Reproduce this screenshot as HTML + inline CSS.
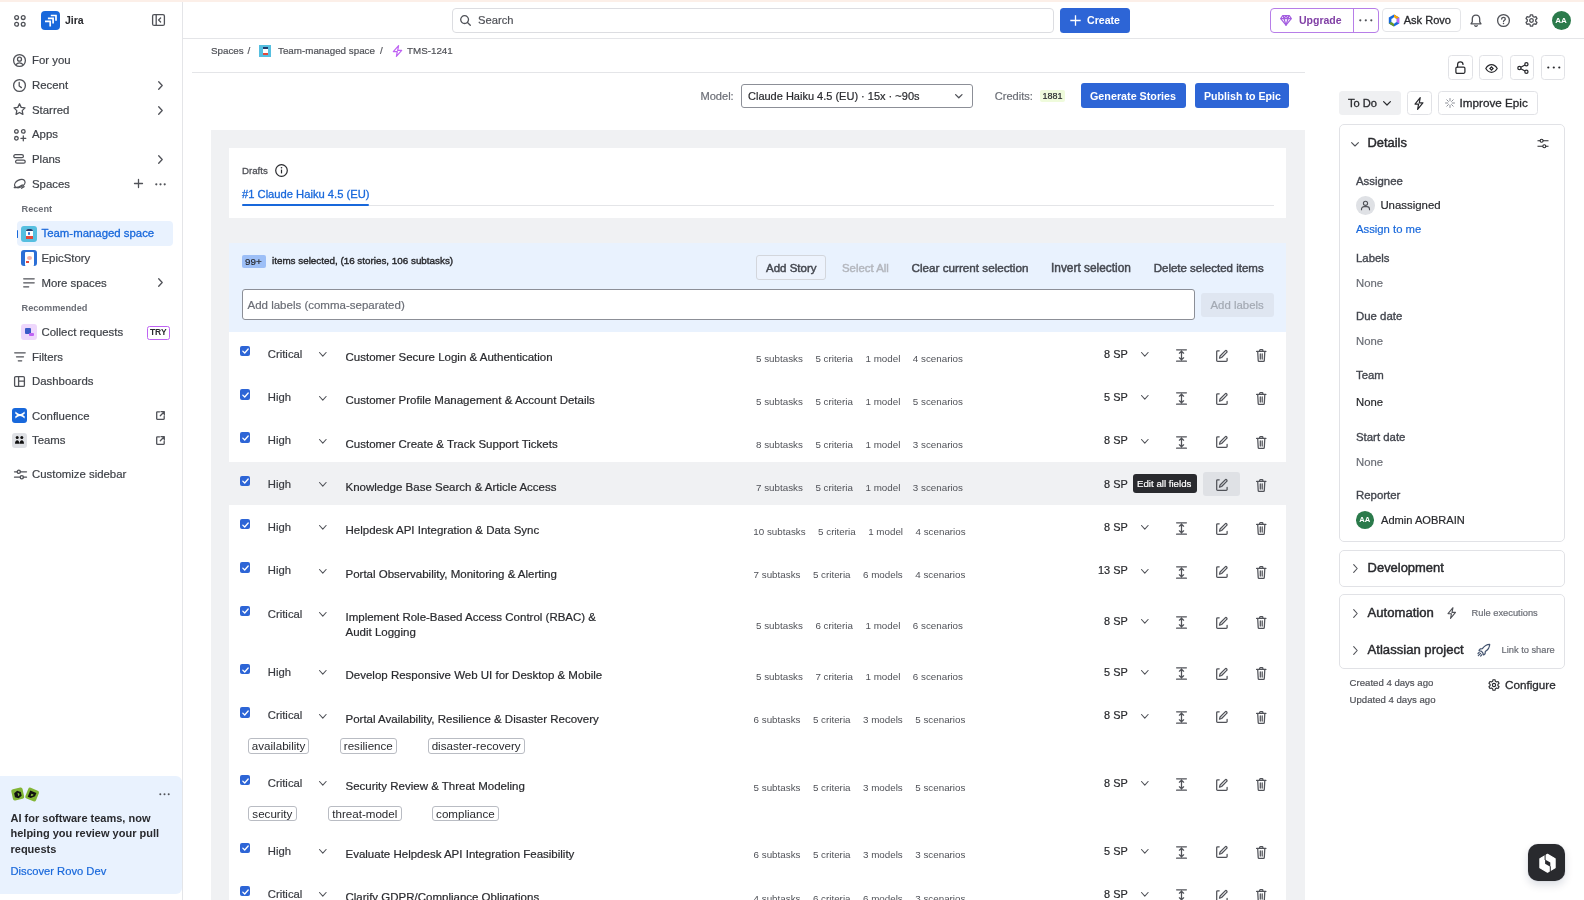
<!DOCTYPE html>
<html><head><meta charset="utf-8">
<style>
*{box-sizing:border-box;margin:0;padding:0}
html,body{width:1584px;height:900px;overflow:hidden;background:#fff}
#root{position:absolute;left:0;top:0;width:1584px;height:900px;will-change:transform}
body{font-family:"Liberation Sans",sans-serif;color:#292a2e;position:relative}
.a{position:absolute}
.t{position:absolute;white-space:nowrap;line-height:20px;height:20px;-webkit-text-stroke:0.2px currentColor}
svg{position:absolute;overflow:visible}
.ic{fill:none;stroke:#505258;stroke-width:1.3;stroke-linecap:round;stroke-linejoin:round}
/* sidebar */
.sb{font-size:11.4px;color:#3f4248}
.t.b,.b{font-weight:bold;-webkit-text-stroke:0}
.m{-webkit-text-stroke:0.3px currentColor}
</style></head><body><div id="root">
<!-- top peach line -->
<div class="a" style="left:0;top:0;width:1584px;height:2px;background:#fcefe8"></div>

<!-- SIDEBAR -->
<div class="a" style="left:182px;top:2px;width:1px;height:898px;background:#e4e5e8"></div>
<div id="sidebar">
  <!-- app grid -->
  <svg style="left:14px;top:15px" width="12" height="12" viewBox="0 0 12 12"><g class="ic" stroke-width="1.2"><circle cx="2.6" cy="2.6" r="1.9"/><circle cx="9.2" cy="2.6" r="1.9"/><circle cx="2.6" cy="9.2" r="1.9"/><circle cx="9.2" cy="9.2" r="1.9"/></g></svg>
  <!-- jira logo -->
  <div class="a" style="left:41px;top:11px;width:19px;height:19px;border-radius:4px;background:#1868db"></div>
  <svg style="left:41px;top:11px" width="19" height="19" viewBox="0 0 19 19"><g fill="none" stroke="#fff" stroke-width="1.7"><path d="M9.8 4.5h5.2v5.2"/><path d="M6.9 7.4h5.2v5.2"/><path d="M4 10.3h5.2v5.2"/></g></svg>
  <div class="t b" style="left:65px;top:10px;font-size:10.5px;color:#292a2e">Jira</div>
  <!-- collapse icon -->
  <svg style="left:152px;top:14px" width="13" height="12" viewBox="0 0 13 12"><g class="ic" stroke-width="1.2"><rect x="0.6" y="0.6" width="11.8" height="10.8" rx="1.5"/><path d="M4.2 0.6v10.8M8.6 4l-2 2 2 2"/></g></svg>

  <!-- main nav -->
  <svg style="left:13px;top:54px" width="13" height="13" viewBox="0 0 13 13"><g class="ic"><circle cx="6.5" cy="6.5" r="5.9"/><circle cx="6.5" cy="5.2" r="2"/><path d="M3 10.6c1-1.3 2.2-1.8 3.5-1.8s2.5.5 3.5 1.8"/></g></svg>
  <div class="t sb" style="left:32px;top:49.8px">For you</div>
  <svg style="left:13px;top:79px" width="13" height="13" viewBox="0 0 13 13"><g class="ic"><circle cx="6.5" cy="6.5" r="5.9"/><path d="M6.2 3.4v3.6l2.2 1.6"/></g></svg>
  <div class="t sb" style="left:32px;top:75px">Recent</div>
  <svg style="left:158px;top:81px" width="5" height="9" viewBox="0 0 5 9"><path class="ic" d="M0.7 0.7l3.5 3.8-3.5 3.8"/></svg>
  <svg style="left:13px;top:103px" width="13" height="13" viewBox="0 0 13 13"><path class="ic" d="M6.5 0.8l1.7 3.6 3.8.5-2.8 2.7.7 3.8-3.4-1.9-3.4 1.9.7-3.8L1 4.9l3.8-.5z"/></svg>
  <div class="t sb" style="left:32px;top:99.8px">Starred</div>
  <svg style="left:158px;top:105.5px" width="5" height="9" viewBox="0 0 5 9"><path class="ic" d="M0.7 0.7l3.5 3.8-3.5 3.8"/></svg>
  <svg style="left:14px;top:129px" width="12" height="12" viewBox="0 0 12 12"><g class="ic" stroke-width="1.2"><circle cx="2.4" cy="2.4" r="1.8"/><circle cx="9.3" cy="2.4" r="1.8"/><circle cx="2.4" cy="9.3" r="1.8"/><path d="M9.3 6.9v4.9M6.9 9.3h4.9"/></g></svg>
  <div class="t sb" style="left:32px;top:124.4px">Apps</div>
  <svg style="left:13px;top:154px" width="13" height="10" viewBox="0 0 13 10"><g class="ic"><path d="M2.3 0.7h6.6a1.5 1.5 0 010 3H2.3a1.5 1.5 0 010-3zM4.1 6.2h6.6a1.5 1.5 0 010 3H4.1a1.5 1.5 0 010-3z"/></g></svg>
  <div class="t sb" style="left:32px;top:149px">Plans</div>
  <svg style="left:158px;top:154.5px" width="5" height="9" viewBox="0 0 5 9"><path class="ic" d="M0.7 0.7l3.5 3.8-3.5 3.8"/></svg>
  <svg style="left:13px;top:178px" width="14" height="12" viewBox="0 0 14 12"><g class="ic" stroke-width="1.25"><ellipse cx="6.8" cy="5.6" rx="5.6" ry="3.6" transform="rotate(-28 6.8 5.6)"/><path d="M1.3 9.5c2.5.3 5.5-.5 8-2.5"/><path d="M8.5 10.2l2.6-1.6"/></g></svg>
  <div class="t sb" style="left:32px;top:173.6px">Spaces</div>
  <svg style="left:134px;top:179px" width="9" height="9" viewBox="0 0 9 9"><path class="ic" d="M4.5 0.5v8M0.5 4.5h8"/></svg>
  <svg style="left:155px;top:183px" width="11" height="3" viewBox="0 0 11 3"><g fill="#505258"><circle cx="1.3" cy="1.3" r="1.1"/><circle cx="5.5" cy="1.3" r="1.1"/><circle cx="9.7" cy="1.3" r="1.1"/></g></svg>

  <div class="t b" style="left:21.5px;top:198.5px;font-size:9.2px;color:#6b6e76">Recent</div>
  <!-- selected -->
  <div class="a" style="left:16.5px;top:221px;width:156.5px;height:24.5px;border-radius:4px;background:#e9f2fe"></div>
  <div class="a" style="left:16.5px;top:229.5px;width:1.6px;height:8px;background:#1868db;border-radius:1px"></div>
  <div class="a" style="left:21px;top:226px;width:16px;height:16px;border-radius:3px;background:#56bfe0;overflow:hidden">
    <div class="a" style="left:4.5px;top:3px;width:7px;height:9.5px;background:#fff;border-radius:2px 2px 1px 1px"></div>
    <div class="a" style="left:4.5px;top:2.5px;width:7px;height:2.5px;background:#213b6b;border-radius:2px 2px 0 0"></div>
    <div class="a" style="left:4.5px;top:10px;width:7px;height:2.5px;background:#e3493b"></div>
    <div class="a" style="left:6.8px;top:6px;width:2.5px;height:2.5px;background:#2b6fd6;border-radius:50%"></div>
  </div>
  <div class="t sb m" style="left:41.5px;top:223.3px;color:#1868db">Team-managed space</div>
  <div class="a" style="left:21px;top:250px;width:16px;height:16px;border-radius:3px;background:#2b6fd6;overflow:hidden">
    <div class="a" style="left:3.5px;top:2px;width:9px;height:14px;background:#fff;border-radius:1px"></div>
    <div class="a" style="left:5.5px;top:6px;width:5px;height:4px;background:#f2b1a8;border-radius:50%"></div>
    <div class="a" style="left:5px;top:11px;width:3px;height:2px;background:#e3493b"></div>
  </div>
  <div class="t sb" style="left:41.5px;top:248.3px">EpicStory</div>
  <svg style="left:23px;top:278px" width="12" height="10" viewBox="0 0 12 10"><path class="ic" d="M0.7 0.8h10.5M0.7 4.8h10.5M0.7 8.8h5"/></svg>
  <div class="t sb" style="left:41.5px;top:272.5px">More spaces</div>
  <svg style="left:158px;top:278px" width="5" height="9" viewBox="0 0 5 9"><path class="ic" d="M0.7 0.7l3.5 3.8-3.5 3.8"/></svg>
  <div class="t b" style="left:21.5px;top:297.5px;font-size:9.2px;color:#6b6e76">Recommended</div>
  <div class="a" style="left:21px;top:324px;width:16px;height:16px;border-radius:3px;background:#eed7fc"></div>
  <div class="a" style="left:25px;top:328px;width:6px;height:6px;background:#3a5bc7;border-radius:1px"></div>
  <div class="a" style="left:29px;top:333px;width:5px;height:3px;background:#bf63f3;border-radius:1px"></div>
  <div class="t sb" style="left:41.5px;top:322px">Collect requests</div>
  <div class="a" style="left:146.5px;top:326px;width:23.5px;height:13.5px;border:1px solid #bf63f3;border-radius:2.5px;font-size:8.5px;font-weight:bold;line-height:11.5px;text-align:center;color:#292a2e">TRY</div>

  <svg style="left:14px;top:352px" width="12" height="10" viewBox="0 0 12 10"><path class="ic" d="M0.7 0.8h10.5M2.5 4.8h7M4.3 8.8h3.4"/></svg>
  <div class="t sb" style="left:32px;top:347px">Filters</div>
  <svg style="left:14px;top:376px" width="11" height="11" viewBox="0 0 11 11"><g class="ic"><rect x="0.6" y="0.6" width="9.8" height="9.8" rx="1.2"/><path d="M4.6 0.6v9.8M4.6 5.2h5.8"/></g></svg>
  <div class="t sb" style="left:32px;top:371.2px">Dashboards</div>

  <div class="a" style="left:12px;top:407.5px;width:15px;height:15px;border-radius:3px;background:#1868db"></div>
  <svg style="left:14.5px;top:410px" width="10" height="10" viewBox="0 0 10 10"><g fill="#fff"><path d="M0.5 1.5c2 2 3.5 2.6 4.5 2.6s2.5-.6 4.5-2.6l.3 2c-1.8 1.5-3.3 2.2-4.8 2.2S2 5 .2 3.5z"/><path d="M0.5 8.5c2-2 3.5-2.6 4.5-2.6s2.5.6 4.5 2.6l.3-2C8 5 6.5 4.3 5 4.3S2 5 .2 6.5z"/></g></svg>
  <div class="t sb" style="left:32px;top:405.8px">Confluence</div>
  <svg style="left:156px;top:411px" width="9" height="9" viewBox="0 0 9 9"><g class="ic" stroke-width="1.1"><path d="M3.5 0.8H1.3a.6.6 0 00-.6.6v6.3a.6.6 0 00.6.6h6.3a.6.6 0 00.6-.6V5.5M5 0.7h3.3V4M8.2 0.8L4.3 4.7"/></g></svg>
  <div class="a" style="left:12px;top:432.5px;width:15px;height:15px;border-radius:3px;background:#dfe1e5"></div>
  <svg style="left:15px;top:436px" width="9" height="8" viewBox="0 0 9 8"><g fill="#111"><circle cx="2.2" cy="1.6" r="1.5"/><circle cx="6.8" cy="1.6" r="1.5"/><path d="M0 7.8c0-2.4.9-3.6 2.2-3.6s2.2 1.2 2.2 3.6zM4.6 7.8c0-2.4.9-3.6 2.2-3.6S9 5.4 9 7.8z"/></g></svg>
  <div class="t sb" style="left:32px;top:430px">Teams</div>
  <svg style="left:156px;top:435.5px" width="9" height="9" viewBox="0 0 9 9"><g class="ic" stroke-width="1.1"><path d="M3.5 0.8H1.3a.6.6 0 00-.6.6v6.3a.6.6 0 00.6.6h6.3a.6.6 0 00.6-.6V5.5M5 0.7h3.3V4M8.2 0.8L4.3 4.7"/></g></svg>
  <svg style="left:13.5px;top:468.5px" width="13" height="11" viewBox="0 0 13 11"><g class="ic" stroke-width="1.1"><path d="M0.5 2.8h2.8M6.3 2.8h6.2M0.5 8.2h5.8M9.3 8.2h3.2"/><circle cx="4.8" cy="2.8" r="1.6"/><circle cx="7.8" cy="8.2" r="1.6"/></g></svg>
  <div class="t sb" style="left:32px;top:464.2px">Customize sidebar</div>

  <!-- promo -->
  <div class="a" style="left:0;top:776px;width:182px;height:117.5px;background:#e9f2fe;border-radius:0 6px 6px 0"></div>
  <svg style="left:11px;top:785.5px" width="29" height="18" viewBox="0 0 29 18"><g transform="rotate(-12 7 9)"><rect x="1.2" y="2.2" width="11.5" height="11.5" rx="2" fill="#82b536"/></g><g transform="rotate(22 21 9)"><rect x="15.2" y="2.8" width="11.5" height="11.5" rx="2" fill="#82b536"/></g><g transform="rotate(-12 7 9)"><path d="M7 4.6l3.4 2v3.9L7 12.4 3.6 10.5V6.6z" fill="#111"/><path d="M7 6.8l1.5.9v1.7L7 10.2z" fill="#82b536"/></g><g transform="rotate(22 21 9)"><path d="M17.7 5.5h6.6v3.5l-3.3 3.3h-3.3z" fill="#111"/><path d="M20 8h2.2v1L21 10.2h-1z" fill="#82b536"/></g></svg>
  <svg style="left:158.5px;top:793px" width="11" height="3" viewBox="0 0 11 3"><g fill="#505258"><circle cx="1.3" cy="1.3" r="1"/><circle cx="5.5" cy="1.3" r="1"/><circle cx="9.7" cy="1.3" r="1"/></g></svg>
  <div class="a b" style="left:10.5px;top:810.5px;width:170px;font-size:11px;line-height:15.5px;color:#292a2e">AI for software teams, now<br>helping you review your pull<br>requests</div>
  <div class="t" style="left:10.5px;top:861px;font-size:11.2px;color:#1868db">Discover Rovo Dev</div>
</div>

<!-- HEADER -->
<div class="a" style="left:183px;top:38px;width:1401px;height:1px;background:#e4e5e8"></div>
<div class="a" style="left:452px;top:8px;width:602px;height:25px;border:1px solid #dcdde1;border-radius:4px"></div>
<svg style="left:460px;top:15px" width="11" height="11" viewBox="0 0 11 11"><g class="ic" stroke-width="1.3"><circle cx="4.6" cy="4.6" r="3.9"/><path d="M7.5 7.5l2.8 2.8"/></g></svg>
<div class="t" style="left:478px;top:10.3px;font-size:11.2px;color:#505258">Search</div>
<div class="a" style="left:1060px;top:8px;width:70px;height:24.5px;border-radius:3.5px;background:#2d65d6"></div>
<svg style="left:1070px;top:15px" width="11" height="11" viewBox="0 0 11 11"><path d="M5.5 0.3v10.4M0.3 5.5h10.4" stroke="#fff" stroke-width="1.3" fill="none"/></svg>
<div class="t b" style="left:1087px;top:10.3px;font-size:10.6px;color:#fff">Create</div>

<div class="a" style="left:1270px;top:8px;width:108.5px;height:24.5px;border:1px solid #b77ee8;border-radius:4px"></div>
<div class="a" style="left:1352.5px;top:8px;width:1px;height:24.5px;background:#b77ee8"></div>
<svg style="left:1280px;top:15px" width="12" height="11" viewBox="0 0 12 11"><g fill="none" stroke="#a45ee0" stroke-width="1.2" stroke-linejoin="round"><path d="M2.7 0.7h6.6l2 3-5.3 6.5L0.7 3.7z"/><path d="M0.7 3.7h10.6M4 3.7L6 10.2 8 3.7M3.3 0.8L4 3.7 6 0.8 8 3.7l.8-2.9"/></g></svg>
<div class="t b" style="left:1299px;top:10.3px;font-size:10.5px;color:#803fa5">Upgrade</div>
<svg style="left:1359px;top:19px" width="14" height="3" viewBox="0 0 14 3"><g fill="#505258"><circle cx="1.3" cy="1.3" r="1.1"/><circle cx="6.8" cy="1.3" r="1.1"/><circle cx="12.3" cy="1.3" r="1.1"/></g></svg>

<div class="a" style="left:1381.5px;top:8.3px;width:79px;height:24px;border:1px solid #e4e5e8;border-radius:4px"></div>
<svg style="left:1388px;top:14px" width="12" height="13" viewBox="0 0 12 13"><path d="M6 0.5l5.2 3v6L6 12.5 0.8 9.5v-6z" fill="#1868db"/><path d="M6 0.5l5.2 3-2.6 1.5L6 3.5z" fill="#fca700"/><path d="M11.2 3.5v6L8.6 8V5z" fill="#bf63f3"/><path d="M0.8 9.5L6 12.5V9.5L3.4 8z" fill="#6a9a23"/><path d="M6 3.5l2.6 1.5v3L6 9.5 3.4 8V5z" fill="#fff"/><path d="M6 3.5v6" stroke="#fff" stroke-width="1"/></svg>
<div class="t m" style="left:1403.7px;top:10.3px;font-size:11.05px;color:#292a2e">Ask Rovo</div>
<svg style="left:1470px;top:14px" width="12" height="13" viewBox="0 0 12 13"><g class="ic" stroke-width="1.2"><path d="M6 1.1c-2.3 0-3.7 1.8-3.7 4v2.7L1 9.8h10L9.7 7.8V5.1c0-2.2-1.4-4-3.7-4z"/><path d="M4.8 11.6c.3.5.7.7 1.2.7s.9-.2 1.2-.7"/></g></svg>
<svg style="left:1497px;top:14px" width="13" height="13" viewBox="0 0 13 13"><g class="ic" stroke-width="1.2"><circle cx="6.5" cy="6.5" r="5.9"/><path d="M4.7 5.1c0-1 .8-1.8 1.8-1.8s1.8.7 1.8 1.6c0 1.3-1.8 1.4-1.8 2.7"/></g><circle cx="6.5" cy="9.6" r=".75" fill="#505258"/></svg>
<svg style="left:1525px;top:14px" width="13" height="13" viewBox="0 0 13 13"><g class="ic" stroke-width="1.2"><path d="M5.4 0.8h2.2l.4 1.7 1.2.7 1.7-.5 1.1 1.9-1.3 1.2v1.4l1.3 1.2-1.1 1.9-1.7-.5-1.2.7-.4 1.7H5.4L5 10.5l-1.2-.7-1.7.5L1 8.4l1.3-1.2V5.8L1 4.6l1.1-1.9 1.7.5L5 2.5z"/><circle cx="6.5" cy="6.5" r="1.8"/></g></svg>
<div class="a" style="left:1551.5px;top:10.8px;width:19px;height:19px;border-radius:50%;background:#2b7a4b;color:#fff;font-size:8px;font-weight:bold;line-height:19px;text-align:center">AA</div>

<!--MAIN-->
<div class="a" style="left:211px;top:129.5px;width:1094px;height:770px;background:#f0f1f3"></div>
<div class="a" style="left:229.3px;top:148px;width:1056.7px;height:70px;background:#fff"></div>
<div class="t m" style="left:242px;top:160.5px;font-size:9.7px;color:#505258">Drafts</div>
<svg style="left:274.5px;top:163.5px" width="13" height="13" viewBox="0 0 13 13"><g fill="none" stroke="#292a2e" stroke-width="1.2"><circle cx="6.5" cy="6.5" r="5.8"/><path d="M6.5 5.6v3.8"/></g><circle cx="6.5" cy="3.8" r=".8" fill="#292a2e"/></svg>
<div class="a" style="left:242px;top:204.5px;width:1031.5px;height:1px;background:#e4e5e8"></div>
<div class="t m" style="left:242px;top:183.5px;font-size:11.2px;color:#1868db">#1 Claude Haiku 4.5 (EU)</div>
<div class="a" style="left:242px;top:203.8px;width:127px;height:2.2px;background:#1868db;border-radius:1px"></div>
<div class="a" style="left:229.3px;top:243px;width:1056.7px;height:89px;background:#e9f2fe"></div>
<div class="a" style="left:242px;top:255px;width:23.7px;height:12.6px;background:#9dbff7;border-radius:2px"></div>
<div class="t" style="left:245px;top:251.5px;font-size:9.8px;color:#292a2e">99+</div>
<div class="t m" style="left:272px;top:251.2px;font-size:9.85px;color:#292a2e;-webkit-text-stroke:0.4px #292a2e">items selected, (16 stories, 106 subtasks)</div>
<div class="a" style="left:756.4px;top:255.3px;width:69.3px;height:24.3px;border:1px solid #d3d6dc;border-radius:3px;background:#edf3fd"></div>
<div class="t" style="left:766px;top:257.9px;font-size:11.5px;color:#44474f;-webkit-text-stroke:0.45px #44474f">Add Story</div>
<div class="t" style="left:842px;top:257.9px;font-size:11.4px;color:#b3b6bd;-webkit-text-stroke:0.45px #b3b6bd">Select All</div>
<div class="t" style="left:911.5px;top:257.9px;font-size:11.7px;color:#44474f;-webkit-text-stroke:0.45px #44474f">Clear current selection</div>
<div class="t" style="left:1051px;top:257.9px;font-size:11.9px;color:#44474f;-webkit-text-stroke:0.45px #44474f">Invert selection</div>
<div class="t" style="left:1153.7px;top:257.9px;font-size:11.5px;color:#44474f;-webkit-text-stroke:0.45px #44474f">Delete selected items</div>
<div class="a" style="left:242px;top:289.4px;width:952.7px;height:30.4px;border:1px solid #8c8f97;border-radius:3px;background:#fff"></div>
<div class="t" style="left:247.5px;top:294.8px;font-size:11.5px;color:#6b6e76">Add labels (comma-separated)</div>
<div class="a" style="left:1201px;top:292.6px;width:72.7px;height:24.1px;border-radius:3px;background:#dfe6f1"></div>
<div class="t" style="left:1210.5px;top:294.8px;font-size:11.4px;color:#a3a9b3">Add labels</div>
<div class="a" style="left:229.3px;top:332px;width:1056.7px;height:568px;background:#fff"></div>
<div class="a" style="left:239.8px;top:345.7px;width:10.4px;height:10.6px;border-radius:2px;background:#2d65d6"></div>
<svg style="left:241.5px;top:348.3px" width="7" height="6" viewBox="0 0 7 6"><path d="M0.8 3.1l1.9 1.9L6.2 1" fill="none" stroke="#fff" stroke-width="1.3" stroke-linecap="round" stroke-linejoin="round"/></svg>
<div class="t" style="left:267.8px;top:343.8px;font-size:11.3px;color:#3a3c42">Critical</div>
<svg style="left:319.2px;top:352.2px" width="7.6" height="4.6" viewBox="0 0 7.6 4.6"><path d="M0.5 0.5L3.8 4.1L7.1 0.5" fill="none" stroke="#505258" stroke-width="1.1" stroke-linecap="round" stroke-linejoin="round"/></svg>
<div class="t" style="left:345.5px;top:347.0px;font-size:11.5px;color:#292a2e">Customer Secure Login &amp; Authentication</div>
<div class="a" style="left:659.5px;top:348.5px;width:400px;height:20px;display:flex;justify-content:center;gap:12.5px;font-size:9.8px;line-height:20px;color:#505258;white-space:nowrap"><span>5 subtasks</span><span>5 criteria</span><span>1 model</span><span>4 scenarios</span></div>
<div class="t" style="left:1027.7px;width:100px;text-align:right;top:343.8px;font-size:10.9px;color:#292a2e">8 SP</div>
<svg style="left:1141.3px;top:352.0px" width="7.6" height="4.6" viewBox="0 0 7.6 4.6"><path d="M0.5 0.5L3.8 4.1L7.1 0.5" fill="none" stroke="#505258" stroke-width="1.1" stroke-linecap="round" stroke-linejoin="round"/></svg>
<svg style="left:1176px;top:349.0px" width="11" height="13" viewBox="0 0 11 13"><g fill="none" stroke="#505258" stroke-width="1.25" stroke-linecap="round" stroke-linejoin="round"><path d="M0.6 0.8h9.8M0.6 12.2h9.8M5.5 2.2v8.6M3.4 4.2l2.1-2 2.1 2M3.4 8.8l2.1 2 2.1-2"/></g></svg>
<svg style="left:1215.8px;top:349.5px" width="12" height="12" viewBox="0 0 12 12"><g fill="none" stroke="#505258" stroke-width="1.25" stroke-linecap="round" stroke-linejoin="round"><path d="M3.2 0.8H1.6a.9.9 0 00-.9.9v8.8a.9.9 0 00.9.9h8.6a.9.9 0 00.9-.9V8.4"/><path d="M9.2 0.9a1 1 0 011.5 1.5L5.6 7.5 3.5 8.2l.6-2.2z"/></g></svg>
<svg style="left:1256.3px;top:349.0px" width="10.5" height="13" viewBox="0 0 10.5 13"><g fill="none" stroke="#505258" stroke-width="1.25" stroke-linecap="round" stroke-linejoin="round"><path d="M0.6 2.4h9.3M3.6 2.3V1.5c0-.5.4-.8.8-.8h1.7c.4 0 .8.3.8.8v.8M1.7 2.5l.5 8.9c0 .5.4.9.9.9h4.3c.5 0 .9-.4.9-.9l.5-8.9M4.3 4.8v5.2M6.2 4.8v5.2"/></g></svg>
<div class="a" style="left:239.8px;top:389.0px;width:10.4px;height:10.6px;border-radius:2px;background:#2d65d6"></div>
<svg style="left:241.5px;top:391.6px" width="7" height="6" viewBox="0 0 7 6"><path d="M0.8 3.1l1.9 1.9L6.2 1" fill="none" stroke="#fff" stroke-width="1.3" stroke-linecap="round" stroke-linejoin="round"/></svg>
<div class="t" style="left:267.8px;top:387.1px;font-size:11.3px;color:#3a3c42">High</div>
<svg style="left:319.2px;top:395.5px" width="7.6" height="4.6" viewBox="0 0 7.6 4.6"><path d="M0.5 0.5L3.8 4.1L7.1 0.5" fill="none" stroke="#505258" stroke-width="1.1" stroke-linecap="round" stroke-linejoin="round"/></svg>
<div class="t" style="left:345.5px;top:390.3px;font-size:11.5px;color:#292a2e">Customer Profile Management &amp; Account Details</div>
<div class="a" style="left:659.5px;top:391.8px;width:400px;height:20px;display:flex;justify-content:center;gap:12.5px;font-size:9.8px;line-height:20px;color:#505258;white-space:nowrap"><span>5 subtasks</span><span>5 criteria</span><span>1 model</span><span>5 scenarios</span></div>
<div class="t" style="left:1027.7px;width:100px;text-align:right;top:387.1px;font-size:10.9px;color:#292a2e">5 SP</div>
<svg style="left:1141.3px;top:395.3px" width="7.6" height="4.6" viewBox="0 0 7.6 4.6"><path d="M0.5 0.5L3.8 4.1L7.1 0.5" fill="none" stroke="#505258" stroke-width="1.1" stroke-linecap="round" stroke-linejoin="round"/></svg>
<svg style="left:1176px;top:392.3px" width="11" height="13" viewBox="0 0 11 13"><g fill="none" stroke="#505258" stroke-width="1.25" stroke-linecap="round" stroke-linejoin="round"><path d="M0.6 0.8h9.8M0.6 12.2h9.8M5.5 2.2v8.6M3.4 4.2l2.1-2 2.1 2M3.4 8.8l2.1 2 2.1-2"/></g></svg>
<svg style="left:1215.8px;top:392.8px" width="12" height="12" viewBox="0 0 12 12"><g fill="none" stroke="#505258" stroke-width="1.25" stroke-linecap="round" stroke-linejoin="round"><path d="M3.2 0.8H1.6a.9.9 0 00-.9.9v8.8a.9.9 0 00.9.9h8.6a.9.9 0 00.9-.9V8.4"/><path d="M9.2 0.9a1 1 0 011.5 1.5L5.6 7.5 3.5 8.2l.6-2.2z"/></g></svg>
<svg style="left:1256.3px;top:392.3px" width="10.5" height="13" viewBox="0 0 10.5 13"><g fill="none" stroke="#505258" stroke-width="1.25" stroke-linecap="round" stroke-linejoin="round"><path d="M0.6 2.4h9.3M3.6 2.3V1.5c0-.5.4-.8.8-.8h1.7c.4 0 .8.3.8.8v.8M1.7 2.5l.5 8.9c0 .5.4.9.9.9h4.3c.5 0 .9-.4.9-.9l.5-8.9M4.3 4.8v5.2M6.2 4.8v5.2"/></g></svg>
<div class="a" style="left:239.8px;top:432.3px;width:10.4px;height:10.6px;border-radius:2px;background:#2d65d6"></div>
<svg style="left:241.5px;top:434.9px" width="7" height="6" viewBox="0 0 7 6"><path d="M0.8 3.1l1.9 1.9L6.2 1" fill="none" stroke="#fff" stroke-width="1.3" stroke-linecap="round" stroke-linejoin="round"/></svg>
<div class="t" style="left:267.8px;top:430.4px;font-size:11.3px;color:#3a3c42">High</div>
<svg style="left:319.2px;top:438.8px" width="7.6" height="4.6" viewBox="0 0 7.6 4.6"><path d="M0.5 0.5L3.8 4.1L7.1 0.5" fill="none" stroke="#505258" stroke-width="1.1" stroke-linecap="round" stroke-linejoin="round"/></svg>
<div class="t" style="left:345.5px;top:433.6px;font-size:11.5px;color:#292a2e">Customer Create &amp; Track Support Tickets</div>
<div class="a" style="left:659.5px;top:435.1px;width:400px;height:20px;display:flex;justify-content:center;gap:12.5px;font-size:9.8px;line-height:20px;color:#505258;white-space:nowrap"><span>8 subtasks</span><span>5 criteria</span><span>1 model</span><span>3 scenarios</span></div>
<div class="t" style="left:1027.7px;width:100px;text-align:right;top:430.4px;font-size:10.9px;color:#292a2e">8 SP</div>
<svg style="left:1141.3px;top:438.6px" width="7.6" height="4.6" viewBox="0 0 7.6 4.6"><path d="M0.5 0.5L3.8 4.1L7.1 0.5" fill="none" stroke="#505258" stroke-width="1.1" stroke-linecap="round" stroke-linejoin="round"/></svg>
<svg style="left:1176px;top:435.6px" width="11" height="13" viewBox="0 0 11 13"><g fill="none" stroke="#505258" stroke-width="1.25" stroke-linecap="round" stroke-linejoin="round"><path d="M0.6 0.8h9.8M0.6 12.2h9.8M5.5 2.2v8.6M3.4 4.2l2.1-2 2.1 2M3.4 8.8l2.1 2 2.1-2"/></g></svg>
<svg style="left:1215.8px;top:436.1px" width="12" height="12" viewBox="0 0 12 12"><g fill="none" stroke="#505258" stroke-width="1.25" stroke-linecap="round" stroke-linejoin="round"><path d="M3.2 0.8H1.6a.9.9 0 00-.9.9v8.8a.9.9 0 00.9.9h8.6a.9.9 0 00.9-.9V8.4"/><path d="M9.2 0.9a1 1 0 011.5 1.5L5.6 7.5 3.5 8.2l.6-2.2z"/></g></svg>
<svg style="left:1256.3px;top:435.6px" width="10.5" height="13" viewBox="0 0 10.5 13"><g fill="none" stroke="#505258" stroke-width="1.25" stroke-linecap="round" stroke-linejoin="round"><path d="M0.6 2.4h9.3M3.6 2.3V1.5c0-.5.4-.8.8-.8h1.7c.4 0 .8.3.8.8v.8M1.7 2.5l.5 8.9c0 .5.4.9.9.9h4.3c.5 0 .9-.4.9-.9l.5-8.9M4.3 4.8v5.2M6.2 4.8v5.2"/></g></svg>
<div class="a" style="left:229.3px;top:461.9px;width:1056.7px;height:43.3px;background:#f0f1f3"></div>
<div class="a" style="left:239.8px;top:475.6px;width:10.4px;height:10.6px;border-radius:2px;background:#2d65d6"></div>
<svg style="left:241.5px;top:478.2px" width="7" height="6" viewBox="0 0 7 6"><path d="M0.8 3.1l1.9 1.9L6.2 1" fill="none" stroke="#fff" stroke-width="1.3" stroke-linecap="round" stroke-linejoin="round"/></svg>
<div class="t" style="left:267.8px;top:473.7px;font-size:11.3px;color:#3a3c42">High</div>
<svg style="left:319.2px;top:482.1px" width="7.6" height="4.6" viewBox="0 0 7.6 4.6"><path d="M0.5 0.5L3.8 4.1L7.1 0.5" fill="none" stroke="#505258" stroke-width="1.1" stroke-linecap="round" stroke-linejoin="round"/></svg>
<div class="t" style="left:345.5px;top:476.9px;font-size:11.5px;color:#292a2e">Knowledge Base Search &amp; Article Access</div>
<div class="a" style="left:659.5px;top:478.4px;width:400px;height:20px;display:flex;justify-content:center;gap:12.5px;font-size:9.8px;line-height:20px;color:#505258;white-space:nowrap"><span>7 subtasks</span><span>5 criteria</span><span>1 model</span><span>3 scenarios</span></div>
<div class="t" style="left:1027.7px;width:100px;text-align:right;top:473.7px;font-size:10.9px;color:#292a2e">8 SP</div>
<div class="a" style="left:1132.5px;top:474.1px;width:64.5px;height:18.7px;border-radius:3px;background:#292a2e"></div>
<div class="t" style="left:1137px;top:474.2px;font-size:9.7px;color:#fff">Edit all fields</div>
<div class="a" style="left:1203.2px;top:471.7px;width:36.4px;height:24.3px;border-radius:3px;background:#dfe1e5"></div>
<svg style="left:1215.8px;top:479.4px" width="12" height="12" viewBox="0 0 12 12"><g fill="none" stroke="#505258" stroke-width="1.25" stroke-linecap="round" stroke-linejoin="round"><path d="M3.2 0.8H1.6a.9.9 0 00-.9.9v8.8a.9.9 0 00.9.9h8.6a.9.9 0 00.9-.9V8.4"/><path d="M9.2 0.9a1 1 0 011.5 1.5L5.6 7.5 3.5 8.2l.6-2.2z"/></g></svg>
<svg style="left:1256.3px;top:478.9px" width="10.5" height="13" viewBox="0 0 10.5 13"><g fill="none" stroke="#505258" stroke-width="1.25" stroke-linecap="round" stroke-linejoin="round"><path d="M0.6 2.4h9.3M3.6 2.3V1.5c0-.5.4-.8.8-.8h1.7c.4 0 .8.3.8.8v.8M1.7 2.5l.5 8.9c0 .5.4.9.9.9h4.3c.5 0 .9-.4.9-.9l.5-8.9M4.3 4.8v5.2M6.2 4.8v5.2"/></g></svg>
<div class="a" style="left:239.8px;top:518.9px;width:10.4px;height:10.6px;border-radius:2px;background:#2d65d6"></div>
<svg style="left:241.5px;top:521.5px" width="7" height="6" viewBox="0 0 7 6"><path d="M0.8 3.1l1.9 1.9L6.2 1" fill="none" stroke="#fff" stroke-width="1.3" stroke-linecap="round" stroke-linejoin="round"/></svg>
<div class="t" style="left:267.8px;top:517.0px;font-size:11.3px;color:#3a3c42">High</div>
<svg style="left:319.2px;top:525.4px" width="7.6" height="4.6" viewBox="0 0 7.6 4.6"><path d="M0.5 0.5L3.8 4.1L7.1 0.5" fill="none" stroke="#505258" stroke-width="1.1" stroke-linecap="round" stroke-linejoin="round"/></svg>
<div class="t" style="left:345.5px;top:520.2px;font-size:11.5px;color:#292a2e">Helpdesk API Integration &amp; Data Sync</div>
<div class="a" style="left:659.5px;top:521.7px;width:400px;height:20px;display:flex;justify-content:center;gap:12.5px;font-size:9.8px;line-height:20px;color:#505258;white-space:nowrap"><span>10 subtasks</span><span>5 criteria</span><span>1 model</span><span>4 scenarios</span></div>
<div class="t" style="left:1027.7px;width:100px;text-align:right;top:517.0px;font-size:10.9px;color:#292a2e">8 SP</div>
<svg style="left:1141.3px;top:525.2px" width="7.6" height="4.6" viewBox="0 0 7.6 4.6"><path d="M0.5 0.5L3.8 4.1L7.1 0.5" fill="none" stroke="#505258" stroke-width="1.1" stroke-linecap="round" stroke-linejoin="round"/></svg>
<svg style="left:1176px;top:522.2px" width="11" height="13" viewBox="0 0 11 13"><g fill="none" stroke="#505258" stroke-width="1.25" stroke-linecap="round" stroke-linejoin="round"><path d="M0.6 0.8h9.8M0.6 12.2h9.8M5.5 2.2v8.6M3.4 4.2l2.1-2 2.1 2M3.4 8.8l2.1 2 2.1-2"/></g></svg>
<svg style="left:1215.8px;top:522.7px" width="12" height="12" viewBox="0 0 12 12"><g fill="none" stroke="#505258" stroke-width="1.25" stroke-linecap="round" stroke-linejoin="round"><path d="M3.2 0.8H1.6a.9.9 0 00-.9.9v8.8a.9.9 0 00.9.9h8.6a.9.9 0 00.9-.9V8.4"/><path d="M9.2 0.9a1 1 0 011.5 1.5L5.6 7.5 3.5 8.2l.6-2.2z"/></g></svg>
<svg style="left:1256.3px;top:522.2px" width="10.5" height="13" viewBox="0 0 10.5 13"><g fill="none" stroke="#505258" stroke-width="1.25" stroke-linecap="round" stroke-linejoin="round"><path d="M0.6 2.4h9.3M3.6 2.3V1.5c0-.5.4-.8.8-.8h1.7c.4 0 .8.3.8.8v.8M1.7 2.5l.5 8.9c0 .5.4.9.9.9h4.3c.5 0 .9-.4.9-.9l.5-8.9M4.3 4.8v5.2M6.2 4.8v5.2"/></g></svg>
<div class="a" style="left:239.8px;top:562.2px;width:10.4px;height:10.6px;border-radius:2px;background:#2d65d6"></div>
<svg style="left:241.5px;top:564.8px" width="7" height="6" viewBox="0 0 7 6"><path d="M0.8 3.1l1.9 1.9L6.2 1" fill="none" stroke="#fff" stroke-width="1.3" stroke-linecap="round" stroke-linejoin="round"/></svg>
<div class="t" style="left:267.8px;top:560.3px;font-size:11.3px;color:#3a3c42">High</div>
<svg style="left:319.2px;top:568.7px" width="7.6" height="4.6" viewBox="0 0 7.6 4.6"><path d="M0.5 0.5L3.8 4.1L7.1 0.5" fill="none" stroke="#505258" stroke-width="1.1" stroke-linecap="round" stroke-linejoin="round"/></svg>
<div class="t" style="left:345.5px;top:563.5px;font-size:11.5px;color:#292a2e">Portal Observability, Monitoring &amp; Alerting</div>
<div class="a" style="left:659.5px;top:565.0px;width:400px;height:20px;display:flex;justify-content:center;gap:12.5px;font-size:9.8px;line-height:20px;color:#505258;white-space:nowrap"><span>7 subtasks</span><span>5 criteria</span><span>6 models</span><span>4 scenarios</span></div>
<div class="t" style="left:1027.7px;width:100px;text-align:right;top:560.3px;font-size:10.9px;color:#292a2e">13 SP</div>
<svg style="left:1141.3px;top:568.5px" width="7.6" height="4.6" viewBox="0 0 7.6 4.6"><path d="M0.5 0.5L3.8 4.1L7.1 0.5" fill="none" stroke="#505258" stroke-width="1.1" stroke-linecap="round" stroke-linejoin="round"/></svg>
<svg style="left:1176px;top:565.5px" width="11" height="13" viewBox="0 0 11 13"><g fill="none" stroke="#505258" stroke-width="1.25" stroke-linecap="round" stroke-linejoin="round"><path d="M0.6 0.8h9.8M0.6 12.2h9.8M5.5 2.2v8.6M3.4 4.2l2.1-2 2.1 2M3.4 8.8l2.1 2 2.1-2"/></g></svg>
<svg style="left:1215.8px;top:566.0px" width="12" height="12" viewBox="0 0 12 12"><g fill="none" stroke="#505258" stroke-width="1.25" stroke-linecap="round" stroke-linejoin="round"><path d="M3.2 0.8H1.6a.9.9 0 00-.9.9v8.8a.9.9 0 00.9.9h8.6a.9.9 0 00.9-.9V8.4"/><path d="M9.2 0.9a1 1 0 011.5 1.5L5.6 7.5 3.5 8.2l.6-2.2z"/></g></svg>
<svg style="left:1256.3px;top:565.5px" width="10.5" height="13" viewBox="0 0 10.5 13"><g fill="none" stroke="#505258" stroke-width="1.25" stroke-linecap="round" stroke-linejoin="round"><path d="M0.6 2.4h9.3M3.6 2.3V1.5c0-.5.4-.8.8-.8h1.7c.4 0 .8.3.8.8v.8M1.7 2.5l.5 8.9c0 .5.4.9.9.9h4.3c.5 0 .9-.4.9-.9l.5-8.9M4.3 4.8v5.2M6.2 4.8v5.2"/></g></svg>
<div class="a" style="left:239.8px;top:605.5px;width:10.4px;height:10.6px;border-radius:2px;background:#2d65d6"></div>
<svg style="left:241.5px;top:608.1px" width="7" height="6" viewBox="0 0 7 6"><path d="M0.8 3.1l1.9 1.9L6.2 1" fill="none" stroke="#fff" stroke-width="1.3" stroke-linecap="round" stroke-linejoin="round"/></svg>
<div class="t" style="left:267.8px;top:603.6px;font-size:11.3px;color:#3a3c42">Critical</div>
<svg style="left:319.2px;top:612.0px" width="7.6" height="4.6" viewBox="0 0 7.6 4.6"><path d="M0.5 0.5L3.8 4.1L7.1 0.5" fill="none" stroke="#505258" stroke-width="1.1" stroke-linecap="round" stroke-linejoin="round"/></svg>
<div class="t" style="left:345.5px;top:606.8px;font-size:11.5px;color:#292a2e">Implement Role-Based Access Control (RBAC) &amp;</div>
<div class="t" style="left:345.5px;top:621.9px;font-size:11.5px;color:#292a2e">Audit Logging</div>
<div class="a" style="left:659.5px;top:615.8px;width:400px;height:20px;display:flex;justify-content:center;gap:12.5px;font-size:9.8px;line-height:20px;color:#505258;white-space:nowrap"><span>5 subtasks</span><span>6 criteria</span><span>1 model</span><span>6 scenarios</span></div>
<div class="t" style="left:1027.7px;width:100px;text-align:right;top:611.1px;font-size:10.9px;color:#292a2e">8 SP</div>
<svg style="left:1141.3px;top:619.3px" width="7.6" height="4.6" viewBox="0 0 7.6 4.6"><path d="M0.5 0.5L3.8 4.1L7.1 0.5" fill="none" stroke="#505258" stroke-width="1.1" stroke-linecap="round" stroke-linejoin="round"/></svg>
<svg style="left:1176px;top:616.3px" width="11" height="13" viewBox="0 0 11 13"><g fill="none" stroke="#505258" stroke-width="1.25" stroke-linecap="round" stroke-linejoin="round"><path d="M0.6 0.8h9.8M0.6 12.2h9.8M5.5 2.2v8.6M3.4 4.2l2.1-2 2.1 2M3.4 8.8l2.1 2 2.1-2"/></g></svg>
<svg style="left:1215.8px;top:616.8px" width="12" height="12" viewBox="0 0 12 12"><g fill="none" stroke="#505258" stroke-width="1.25" stroke-linecap="round" stroke-linejoin="round"><path d="M3.2 0.8H1.6a.9.9 0 00-.9.9v8.8a.9.9 0 00.9.9h8.6a.9.9 0 00.9-.9V8.4"/><path d="M9.2 0.9a1 1 0 011.5 1.5L5.6 7.5 3.5 8.2l.6-2.2z"/></g></svg>
<svg style="left:1256.3px;top:616.3px" width="10.5" height="13" viewBox="0 0 10.5 13"><g fill="none" stroke="#505258" stroke-width="1.25" stroke-linecap="round" stroke-linejoin="round"><path d="M0.6 2.4h9.3M3.6 2.3V1.5c0-.5.4-.8.8-.8h1.7c.4 0 .8.3.8.8v.8M1.7 2.5l.5 8.9c0 .5.4.9.9.9h4.3c.5 0 .9-.4.9-.9l.5-8.9M4.3 4.8v5.2M6.2 4.8v5.2"/></g></svg>
<div class="a" style="left:239.8px;top:663.9px;width:10.4px;height:10.6px;border-radius:2px;background:#2d65d6"></div>
<svg style="left:241.5px;top:666.5px" width="7" height="6" viewBox="0 0 7 6"><path d="M0.8 3.1l1.9 1.9L6.2 1" fill="none" stroke="#fff" stroke-width="1.3" stroke-linecap="round" stroke-linejoin="round"/></svg>
<div class="t" style="left:267.8px;top:662.0px;font-size:11.3px;color:#3a3c42">High</div>
<svg style="left:319.2px;top:670.4px" width="7.6" height="4.6" viewBox="0 0 7.6 4.6"><path d="M0.5 0.5L3.8 4.1L7.1 0.5" fill="none" stroke="#505258" stroke-width="1.1" stroke-linecap="round" stroke-linejoin="round"/></svg>
<div class="t" style="left:345.5px;top:665.2px;font-size:11.5px;color:#292a2e">Develop Responsive Web UI for Desktop &amp; Mobile</div>
<div class="a" style="left:659.5px;top:666.7px;width:400px;height:20px;display:flex;justify-content:center;gap:12.5px;font-size:9.8px;line-height:20px;color:#505258;white-space:nowrap"><span>5 subtasks</span><span>7 criteria</span><span>1 model</span><span>6 scenarios</span></div>
<div class="t" style="left:1027.7px;width:100px;text-align:right;top:662.0px;font-size:10.9px;color:#292a2e">5 SP</div>
<svg style="left:1141.3px;top:670.2px" width="7.6" height="4.6" viewBox="0 0 7.6 4.6"><path d="M0.5 0.5L3.8 4.1L7.1 0.5" fill="none" stroke="#505258" stroke-width="1.1" stroke-linecap="round" stroke-linejoin="round"/></svg>
<svg style="left:1176px;top:667.2px" width="11" height="13" viewBox="0 0 11 13"><g fill="none" stroke="#505258" stroke-width="1.25" stroke-linecap="round" stroke-linejoin="round"><path d="M0.6 0.8h9.8M0.6 12.2h9.8M5.5 2.2v8.6M3.4 4.2l2.1-2 2.1 2M3.4 8.8l2.1 2 2.1-2"/></g></svg>
<svg style="left:1215.8px;top:667.7px" width="12" height="12" viewBox="0 0 12 12"><g fill="none" stroke="#505258" stroke-width="1.25" stroke-linecap="round" stroke-linejoin="round"><path d="M3.2 0.8H1.6a.9.9 0 00-.9.9v8.8a.9.9 0 00.9.9h8.6a.9.9 0 00.9-.9V8.4"/><path d="M9.2 0.9a1 1 0 011.5 1.5L5.6 7.5 3.5 8.2l.6-2.2z"/></g></svg>
<svg style="left:1256.3px;top:667.2px" width="10.5" height="13" viewBox="0 0 10.5 13"><g fill="none" stroke="#505258" stroke-width="1.25" stroke-linecap="round" stroke-linejoin="round"><path d="M0.6 2.4h9.3M3.6 2.3V1.5c0-.5.4-.8.8-.8h1.7c.4 0 .8.3.8.8v.8M1.7 2.5l.5 8.9c0 .5.4.9.9.9h4.3c.5 0 .9-.4.9-.9l.5-8.9M4.3 4.8v5.2M6.2 4.8v5.2"/></g></svg>
<div class="a" style="left:239.8px;top:707.2px;width:10.4px;height:10.6px;border-radius:2px;background:#2d65d6"></div>
<svg style="left:241.5px;top:709.8px" width="7" height="6" viewBox="0 0 7 6"><path d="M0.8 3.1l1.9 1.9L6.2 1" fill="none" stroke="#fff" stroke-width="1.3" stroke-linecap="round" stroke-linejoin="round"/></svg>
<div class="t" style="left:267.8px;top:705.3px;font-size:11.3px;color:#3a3c42">Critical</div>
<svg style="left:319.2px;top:713.7px" width="7.6" height="4.6" viewBox="0 0 7.6 4.6"><path d="M0.5 0.5L3.8 4.1L7.1 0.5" fill="none" stroke="#505258" stroke-width="1.1" stroke-linecap="round" stroke-linejoin="round"/></svg>
<div class="t" style="left:345.5px;top:708.5px;font-size:11.5px;color:#292a2e">Portal Availability, Resilience &amp; Disaster Recovery</div>
<div class="a" style="left:659.5px;top:710.0px;width:400px;height:20px;display:flex;justify-content:center;gap:12.5px;font-size:9.8px;line-height:20px;color:#505258;white-space:nowrap"><span>6 subtasks</span><span>5 criteria</span><span>3 models</span><span>5 scenarios</span></div>
<div class="t" style="left:1027.7px;width:100px;text-align:right;top:705.3px;font-size:10.9px;color:#292a2e">8 SP</div>
<svg style="left:1141.3px;top:713.5px" width="7.6" height="4.6" viewBox="0 0 7.6 4.6"><path d="M0.5 0.5L3.8 4.1L7.1 0.5" fill="none" stroke="#505258" stroke-width="1.1" stroke-linecap="round" stroke-linejoin="round"/></svg>
<svg style="left:1176px;top:710.5px" width="11" height="13" viewBox="0 0 11 13"><g fill="none" stroke="#505258" stroke-width="1.25" stroke-linecap="round" stroke-linejoin="round"><path d="M0.6 0.8h9.8M0.6 12.2h9.8M5.5 2.2v8.6M3.4 4.2l2.1-2 2.1 2M3.4 8.8l2.1 2 2.1-2"/></g></svg>
<svg style="left:1215.8px;top:711.0px" width="12" height="12" viewBox="0 0 12 12"><g fill="none" stroke="#505258" stroke-width="1.25" stroke-linecap="round" stroke-linejoin="round"><path d="M3.2 0.8H1.6a.9.9 0 00-.9.9v8.8a.9.9 0 00.9.9h8.6a.9.9 0 00.9-.9V8.4"/><path d="M9.2 0.9a1 1 0 011.5 1.5L5.6 7.5 3.5 8.2l.6-2.2z"/></g></svg>
<svg style="left:1256.3px;top:710.5px" width="10.5" height="13" viewBox="0 0 10.5 13"><g fill="none" stroke="#505258" stroke-width="1.25" stroke-linecap="round" stroke-linejoin="round"><path d="M0.6 2.4h9.3M3.6 2.3V1.5c0-.5.4-.8.8-.8h1.7c.4 0 .8.3.8.8v.8M1.7 2.5l.5 8.9c0 .5.4.9.9.9h4.3c.5 0 .9-.4.9-.9l.5-8.9M4.3 4.8v5.2M6.2 4.8v5.2"/></g></svg>
<div class="a" style="left:248px;top:738.3px;width:61.2px;height:15.3px;border:1px solid #b9bcc3;border-radius:3px;font-size:11.6px;line-height:14.6px;text-align:center;color:#292a2e;white-space:nowrap">availability</div>
<div class="a" style="left:340px;top:738.3px;width:56.6px;height:15.3px;border:1px solid #b9bcc3;border-radius:3px;font-size:11.6px;line-height:14.6px;text-align:center;color:#292a2e;white-space:nowrap">resilience</div>
<div class="a" style="left:427.6px;top:738.3px;width:97.0px;height:15.3px;border:1px solid #b9bcc3;border-radius:3px;font-size:11.6px;line-height:14.6px;text-align:center;color:#292a2e;white-space:nowrap">disaster-recovery</div>
<div class="a" style="left:239.8px;top:774.9px;width:10.4px;height:10.6px;border-radius:2px;background:#2d65d6"></div>
<svg style="left:241.5px;top:777.5px" width="7" height="6" viewBox="0 0 7 6"><path d="M0.8 3.1l1.9 1.9L6.2 1" fill="none" stroke="#fff" stroke-width="1.3" stroke-linecap="round" stroke-linejoin="round"/></svg>
<div class="t" style="left:267.8px;top:773.0px;font-size:11.3px;color:#3a3c42">Critical</div>
<svg style="left:319.2px;top:781.4px" width="7.6" height="4.6" viewBox="0 0 7.6 4.6"><path d="M0.5 0.5L3.8 4.1L7.1 0.5" fill="none" stroke="#505258" stroke-width="1.1" stroke-linecap="round" stroke-linejoin="round"/></svg>
<div class="t" style="left:345.5px;top:776.2px;font-size:11.5px;color:#292a2e">Security Review &amp; Threat Modeling</div>
<div class="a" style="left:659.5px;top:777.7px;width:400px;height:20px;display:flex;justify-content:center;gap:12.5px;font-size:9.8px;line-height:20px;color:#505258;white-space:nowrap"><span>5 subtasks</span><span>5 criteria</span><span>3 models</span><span>5 scenarios</span></div>
<div class="t" style="left:1027.7px;width:100px;text-align:right;top:773.0px;font-size:10.9px;color:#292a2e">8 SP</div>
<svg style="left:1141.3px;top:781.2px" width="7.6" height="4.6" viewBox="0 0 7.6 4.6"><path d="M0.5 0.5L3.8 4.1L7.1 0.5" fill="none" stroke="#505258" stroke-width="1.1" stroke-linecap="round" stroke-linejoin="round"/></svg>
<svg style="left:1176px;top:778.2px" width="11" height="13" viewBox="0 0 11 13"><g fill="none" stroke="#505258" stroke-width="1.25" stroke-linecap="round" stroke-linejoin="round"><path d="M0.6 0.8h9.8M0.6 12.2h9.8M5.5 2.2v8.6M3.4 4.2l2.1-2 2.1 2M3.4 8.8l2.1 2 2.1-2"/></g></svg>
<svg style="left:1215.8px;top:778.7px" width="12" height="12" viewBox="0 0 12 12"><g fill="none" stroke="#505258" stroke-width="1.25" stroke-linecap="round" stroke-linejoin="round"><path d="M3.2 0.8H1.6a.9.9 0 00-.9.9v8.8a.9.9 0 00.9.9h8.6a.9.9 0 00.9-.9V8.4"/><path d="M9.2 0.9a1 1 0 011.5 1.5L5.6 7.5 3.5 8.2l.6-2.2z"/></g></svg>
<svg style="left:1256.3px;top:778.2px" width="10.5" height="13" viewBox="0 0 10.5 13"><g fill="none" stroke="#505258" stroke-width="1.25" stroke-linecap="round" stroke-linejoin="round"><path d="M0.6 2.4h9.3M3.6 2.3V1.5c0-.5.4-.8.8-.8h1.7c.4 0 .8.3.8.8v.8M1.7 2.5l.5 8.9c0 .5.4.9.9.9h4.3c.5 0 .9-.4.9-.9l.5-8.9M4.3 4.8v5.2M6.2 4.8v5.2"/></g></svg>
<div class="a" style="left:248px;top:806.0px;width:48.7px;height:15.3px;border:1px solid #b9bcc3;border-radius:3px;font-size:11.6px;line-height:14.6px;text-align:center;color:#292a2e;white-space:nowrap">security</div>
<div class="a" style="left:328px;top:806.0px;width:73.6px;height:15.3px;border:1px solid #b9bcc3;border-radius:3px;font-size:11.6px;line-height:14.6px;text-align:center;color:#292a2e;white-space:nowrap">threat-model</div>
<div class="a" style="left:432.2px;top:806.0px;width:66.5px;height:15.3px;border:1px solid #b9bcc3;border-radius:3px;font-size:11.6px;line-height:14.6px;text-align:center;color:#292a2e;white-space:nowrap">compliance</div>
<div class="a" style="left:239.8px;top:842.6px;width:10.4px;height:10.6px;border-radius:2px;background:#2d65d6"></div>
<svg style="left:241.5px;top:845.2px" width="7" height="6" viewBox="0 0 7 6"><path d="M0.8 3.1l1.9 1.9L6.2 1" fill="none" stroke="#fff" stroke-width="1.3" stroke-linecap="round" stroke-linejoin="round"/></svg>
<div class="t" style="left:267.8px;top:840.7px;font-size:11.3px;color:#3a3c42">High</div>
<svg style="left:319.2px;top:849.1px" width="7.6" height="4.6" viewBox="0 0 7.6 4.6"><path d="M0.5 0.5L3.8 4.1L7.1 0.5" fill="none" stroke="#505258" stroke-width="1.1" stroke-linecap="round" stroke-linejoin="round"/></svg>
<div class="t" style="left:345.5px;top:843.9px;font-size:11.5px;color:#292a2e">Evaluate Helpdesk API Integration Feasibility</div>
<div class="a" style="left:659.5px;top:845.4px;width:400px;height:20px;display:flex;justify-content:center;gap:12.5px;font-size:9.8px;line-height:20px;color:#505258;white-space:nowrap"><span>6 subtasks</span><span>5 criteria</span><span>3 models</span><span>3 scenarios</span></div>
<div class="t" style="left:1027.7px;width:100px;text-align:right;top:840.7px;font-size:10.9px;color:#292a2e">5 SP</div>
<svg style="left:1141.3px;top:848.9px" width="7.6" height="4.6" viewBox="0 0 7.6 4.6"><path d="M0.5 0.5L3.8 4.1L7.1 0.5" fill="none" stroke="#505258" stroke-width="1.1" stroke-linecap="round" stroke-linejoin="round"/></svg>
<svg style="left:1176px;top:845.9px" width="11" height="13" viewBox="0 0 11 13"><g fill="none" stroke="#505258" stroke-width="1.25" stroke-linecap="round" stroke-linejoin="round"><path d="M0.6 0.8h9.8M0.6 12.2h9.8M5.5 2.2v8.6M3.4 4.2l2.1-2 2.1 2M3.4 8.8l2.1 2 2.1-2"/></g></svg>
<svg style="left:1215.8px;top:846.4px" width="12" height="12" viewBox="0 0 12 12"><g fill="none" stroke="#505258" stroke-width="1.25" stroke-linecap="round" stroke-linejoin="round"><path d="M3.2 0.8H1.6a.9.9 0 00-.9.9v8.8a.9.9 0 00.9.9h8.6a.9.9 0 00.9-.9V8.4"/><path d="M9.2 0.9a1 1 0 011.5 1.5L5.6 7.5 3.5 8.2l.6-2.2z"/></g></svg>
<svg style="left:1256.3px;top:845.9px" width="10.5" height="13" viewBox="0 0 10.5 13"><g fill="none" stroke="#505258" stroke-width="1.25" stroke-linecap="round" stroke-linejoin="round"><path d="M0.6 2.4h9.3M3.6 2.3V1.5c0-.5.4-.8.8-.8h1.7c.4 0 .8.3.8.8v.8M1.7 2.5l.5 8.9c0 .5.4.9.9.9h4.3c.5 0 .9-.4.9-.9l.5-8.9M4.3 4.8v5.2M6.2 4.8v5.2"/></g></svg>
<div class="a" style="left:239.8px;top:885.9px;width:10.4px;height:10.6px;border-radius:2px;background:#2d65d6"></div>
<svg style="left:241.5px;top:888.5px" width="7" height="6" viewBox="0 0 7 6"><path d="M0.8 3.1l1.9 1.9L6.2 1" fill="none" stroke="#fff" stroke-width="1.3" stroke-linecap="round" stroke-linejoin="round"/></svg>
<div class="t" style="left:267.8px;top:884.0px;font-size:11.3px;color:#3a3c42">Critical</div>
<svg style="left:319.2px;top:892.4px" width="7.6" height="4.6" viewBox="0 0 7.6 4.6"><path d="M0.5 0.5L3.8 4.1L7.1 0.5" fill="none" stroke="#505258" stroke-width="1.1" stroke-linecap="round" stroke-linejoin="round"/></svg>
<div class="t" style="left:345.5px;top:887.2px;font-size:11.5px;color:#292a2e">Clarify GDPR/Compliance Obligations</div>
<div class="a" style="left:659.5px;top:888.7px;width:400px;height:20px;display:flex;justify-content:center;gap:12.5px;font-size:9.8px;line-height:20px;color:#505258;white-space:nowrap"><span>4 subtasks</span><span>6 criteria</span><span>6 models</span><span>3 scenarios</span></div>
<div class="t" style="left:1027.7px;width:100px;text-align:right;top:884.0px;font-size:10.9px;color:#292a2e">8 SP</div>
<svg style="left:1141.3px;top:892.2px" width="7.6" height="4.6" viewBox="0 0 7.6 4.6"><path d="M0.5 0.5L3.8 4.1L7.1 0.5" fill="none" stroke="#505258" stroke-width="1.1" stroke-linecap="round" stroke-linejoin="round"/></svg>
<svg style="left:1176px;top:889.2px" width="11" height="13" viewBox="0 0 11 13"><g fill="none" stroke="#505258" stroke-width="1.25" stroke-linecap="round" stroke-linejoin="round"><path d="M0.6 0.8h9.8M0.6 12.2h9.8M5.5 2.2v8.6M3.4 4.2l2.1-2 2.1 2M3.4 8.8l2.1 2 2.1-2"/></g></svg>
<svg style="left:1215.8px;top:889.7px" width="12" height="12" viewBox="0 0 12 12"><g fill="none" stroke="#505258" stroke-width="1.25" stroke-linecap="round" stroke-linejoin="round"><path d="M3.2 0.8H1.6a.9.9 0 00-.9.9v8.8a.9.9 0 00.9.9h8.6a.9.9 0 00.9-.9V8.4"/><path d="M9.2 0.9a1 1 0 011.5 1.5L5.6 7.5 3.5 8.2l.6-2.2z"/></g></svg>
<svg style="left:1256.3px;top:889.2px" width="10.5" height="13" viewBox="0 0 10.5 13"><g fill="none" stroke="#505258" stroke-width="1.25" stroke-linecap="round" stroke-linejoin="round"><path d="M0.6 2.4h9.3M3.6 2.3V1.5c0-.5.4-.8.8-.8h1.7c.4 0 .8.3.8.8v.8M1.7 2.5l.5 8.9c0 .5.4.9.9.9h4.3c.5 0 .9-.4.9-.9l.5-8.9M4.3 4.8v5.2M6.2 4.8v5.2"/></g></svg>
<!--/MAIN-->
<!-- BREADCRUMBS -->
<div class="t" style="left:211px;top:41px;font-size:9.8px;color:#505258">Spaces</div>
<div class="t" style="left:247.5px;top:41px;font-size:9.8px;color:#505258">/</div>
<div class="a" style="left:259px;top:45px;width:12px;height:12px;background:#56bfe0;overflow:hidden">
  <div class="a" style="left:3.5px;top:2.5px;width:5px;height:7px;background:#fff;border-radius:1px"></div>
  <div class="a" style="left:3.5px;top:2px;width:5px;height:2px;background:#213b6b"></div>
  <div class="a" style="left:3.5px;top:8px;width:5px;height:1.8px;background:#e3493b"></div>
</div>
<div class="t" style="left:278px;top:41px;font-size:9.8px;color:#505258">Team-managed space</div>
<div class="t" style="left:380px;top:41px;font-size:9.8px;color:#505258">/</div>
<svg style="left:392px;top:45px" width="11" height="12" viewBox="0 0 11 12"><path d="M6.6 0.6L1.3 6.6h4L4.4 11.4l5.3-6h-4z" fill="none" stroke="#bf63f3" stroke-width="1.2" stroke-linejoin="round"/></svg>
<div class="t" style="left:407px;top:41px;font-size:9.8px;color:#505258">TMS-1241</div>
<div class="a" style="left:192px;top:71.5px;width:1113px;height:1.5px;background:#e4e5e8"></div>

<!-- MODEL ROW -->
<div class="t" style="left:700.4px;top:85.6px;font-size:11.1px;color:#6b6e76">Model:</div>
<div class="a" style="left:741px;top:83.5px;width:231.5px;height:24px;border:1px solid #8c8f97;border-radius:3px"></div>
<div class="t" style="left:748px;top:85.6px;font-size:11px;color:#292a2e">Claude Haiku 4.5 (EU) · 15x · ~90s</div>
<svg style="left:954.5px;top:94px" width="8" height="5" viewBox="0 0 8 5"><path class="ic" stroke-width="1.1" d="M0.6 0.6L3.8 3.8l3.2-3.2"/></svg>
<div class="t" style="left:994.7px;top:85.8px;font-size:11.1px;color:#6b6e76">Credits:</div>
<div class="a" style="left:1040px;top:90px;width:25px;height:11.7px;background:#effbdc;border-radius:2px"></div>
<div class="t" style="left:1042.5px;top:85.8px;font-size:9px;color:#292a2e">1881</div>
<div class="a" style="left:1081px;top:83px;width:104.5px;height:24.7px;border-radius:3px;background:#2d65d6"></div>
<div class="t b" style="left:1090px;top:85.6px;font-size:10.75px;color:#fff">Generate Stories</div>
<div class="a" style="left:1195px;top:83px;width:94px;height:24.7px;border-radius:3px;background:#2d65d6"></div>
<div class="t b" style="left:1204px;top:85.6px;font-size:10.65px;color:#fff">Publish to Epic</div>
<!--RIGHT-->
<div class="a" style="left:1448.3px;top:55.4px;width:24.4px;height:24.4px;border:1px solid #e1e2e6;border-radius:3.5px;background:#fff"></div>
<div class="a" style="left:1479.1px;top:55.4px;width:24.4px;height:24.4px;border:1px solid #e1e2e6;border-radius:3.5px;background:#fff"></div>
<div class="a" style="left:1510px;top:55.4px;width:24.4px;height:24.4px;border:1px solid #e1e2e6;border-radius:3.5px;background:#fff"></div>
<div class="a" style="left:1540.9px;top:55.4px;width:24.4px;height:24.4px;border:1px solid #e1e2e6;border-radius:3.5px;background:#fff"></div>
<svg style="left:1455px;top:61px" width="11" height="13" viewBox="0 0 11 13"><g fill="none" stroke="#292a2e" stroke-width="1.25" stroke-linecap="round" stroke-linejoin="round"><rect x="0.9" y="6" width="9" height="6.3" rx="1.2"/><path d="M2.6 6V3.6C2.6 2 3.8.8 5.3.8s2.7 1.1 2.7 2.6"/></g></svg>
<svg style="left:1485px;top:63.5px" width="13" height="9" viewBox="0 0 13 9"><g fill="none" stroke="#292a2e" stroke-width="1.2"><path d="M0.8 4.5C2.3 1.9 4.3.7 6.5.7s4.2 1.2 5.7 3.8c-1.5 2.6-3.5 3.8-5.7 3.8S2.3 7.1.8 4.5z"/><path d="M6.5 2.9l1.6 1.6-1.6 1.6-1.6-1.6z"/></g></svg>
<svg style="left:1516.5px;top:62px" width="12" height="12" viewBox="0 0 12 12"><g fill="none" stroke="#292a2e" stroke-width="1.25"><circle cx="2.4" cy="6" r="1.6"/><circle cx="9.4" cy="2.2" r="1.6"/><circle cx="9.4" cy="9.8" r="1.6"/><path d="M3.8 5.2l4.2-2.2M3.8 6.8l4.2 2.2"/></g></svg>
<svg style="left:1546.5px;top:66px" width="14" height="3" viewBox="0 0 14 3"><g fill="#292a2e"><circle cx="1.3" cy="1.5" r="1.1"/><circle cx="6.8" cy="1.5" r="1.1"/><circle cx="12.3" cy="1.5" r="1.1"/></g></svg>
<div class="a" style="left:1338.8px;top:90.7px;width:61.8px;height:24.1px;border-radius:3.5px;background:#eff0f2"></div>
<div class="t m" style="left:1348px;top:93.4px;font-size:11.1px;color:#292a2e">To Do</div>
<svg style="left:1383px;top:100.5px" width="8" height="5" viewBox="0 0 8 5"><path d="M0.6 0.6L4 4l3.4-3.4" fill="none" stroke="#292a2e" stroke-width="1.2" stroke-linecap="round" stroke-linejoin="round"/></svg>
<div class="a" style="left:1407px;top:90.7px;width:24.5px;height:24.1px;border:1px solid #e1e2e6;border-radius:3.5px;background:#fff"></div>
<svg style="left:1414px;top:96.5px" width="10" height="13" viewBox="0 0 10 13"><path d="M6.2 0.7L1 7.1h3.6l-1 5.2 5.3-6.5H5.3z" fill="none" stroke="#292a2e" stroke-width="1.2" stroke-linejoin="round"/></svg>
<div class="a" style="left:1437.9px;top:90.7px;width:99.8px;height:24.1px;border:1px solid #e1e2e6;border-radius:3.5px;background:#fff"></div>
<svg style="left:1445px;top:98px" width="10" height="10" viewBox="0 0 10 10"><g stroke="#8c8f97" stroke-width="1" stroke-linecap="round"><path d="M5 0.5v2.3M5 7.2v2.3M0.5 5h2.3M7.2 5h2.3M1.8 1.8l1.6 1.6M6.6 6.6l1.6 1.6M1.8 8.2l1.6-1.6M6.6 3.4l1.6-1.6"/></g></svg>
<div class="t m" style="left:1459.6px;top:93.2px;font-size:11.7px;color:#292a2e">Improve Epic</div>
<div class="a" style="left:1339.3px;top:124.4px;width:226.1px;height:417.6px;border:1px solid #e1e2e6;border-radius:5px"></div>
<svg style="left:1350.5px;top:141.5px" width="8" height="5" viewBox="0 0 8 5"><path d="M0.6 0.6L4 4l3.4-3.4" fill="none" stroke="#505258" stroke-width="1.1" stroke-linecap="round" stroke-linejoin="round"/></svg>
<div class="t" style="left:1367.5px;top:133.2px;font-size:12.9px;color:#292a2e;-webkit-text-stroke:0.45px #292a2e">Details</div>
<svg style="left:1537px;top:137.5px" width="12" height="11" viewBox="0 0 12 11"><g fill="none" stroke="#292a2e" stroke-width="1.1"><path d="M0.5 2.8h2.8M6 2.8h5.5M0.5 8.2h5.3M8.7 8.2h2.8"/><circle cx="4.6" cy="2.8" r="1.5"/><circle cx="7.3" cy="8.2" r="1.5"/></g></svg>
<div class="t m" style="left:1356px;top:170.5px;font-size:11.4px;color:#44474f;-webkit-text-stroke:0.35px #44474f">Assignee</div>
<div class="a" style="left:1356px;top:196.1px;width:18.7px;height:18.7px;border-radius:50%;background:#dfe1e5"></div>
<svg style="left:1360px;top:199.5px" width="11" height="11" viewBox="0 0 11 11"><g fill="none" stroke="#505258" stroke-width="1.1"><circle cx="5.5" cy="3.3" r="2.1"/><path d="M1.5 10.3V9.2c0-1.5 1.2-2.6 2.6-2.6h2.8c1.4 0 2.6 1.1 2.6 2.6v1.1"/></g></svg>
<div class="t" style="left:1380.4px;top:195.4px;font-size:11.4px;color:#292a2e">Unassigned</div>
<div class="t" style="left:1356px;top:219.0px;font-size:11.3px;color:#1868db">Assign to me</div>
<div class="t m" style="left:1356px;top:248.0px;font-size:11.4px;color:#44474f;-webkit-text-stroke:0.35px #44474f">Labels</div>
<div class="t" style="left:1356px;top:273.0px;font-size:11.3px;color:#6b6e76">None</div>
<div class="t m" style="left:1356px;top:306.2px;font-size:11.4px;color:#44474f;-webkit-text-stroke:0.35px #44474f">Due date</div>
<div class="t" style="left:1356px;top:331.3px;font-size:11.3px;color:#6b6e76">None</div>
<div class="t m" style="left:1356px;top:365.0px;font-size:11.4px;color:#44474f;-webkit-text-stroke:0.35px #44474f">Team</div>
<div class="t" style="left:1356px;top:391.5px;font-size:11.3px;color:#292a2e">None</div>
<div class="t m" style="left:1356px;top:426.7px;font-size:11.4px;color:#44474f;-webkit-text-stroke:0.35px #44474f">Start date</div>
<div class="t" style="left:1356px;top:451.8px;font-size:11.3px;color:#6b6e76">None</div>
<div class="t m" style="left:1356px;top:485.1px;font-size:11.4px;color:#44474f;-webkit-text-stroke:0.35px #44474f">Reporter</div>
<div class="a" style="left:1355.7px;top:511.3px;width:18.3px;height:18px;border-radius:50%;background:#2b7a4b;color:#fff;font-size:7.6px;font-weight:bold;line-height:18px;text-align:center">AA</div>
<div class="t" style="left:1381px;top:510.3px;font-size:11.1px;color:#292a2e">Admin AOBRAIN</div>
<div class="a" style="left:1338.9px;top:549.6px;width:226.2px;height:37.5px;border:1px solid #e1e2e6;border-radius:5px"></div>
<svg style="left:1352.5px;top:563.5px" width="5" height="9" viewBox="0 0 5 9"><path d="M0.7 0.7l3.5 3.8-3.5 3.8" fill="none" stroke="#505258" stroke-width="1.1" stroke-linecap="round" stroke-linejoin="round"/></svg>
<div class="t" style="left:1367.6px;top:558px;font-size:12.95px;color:#292a2e;-webkit-text-stroke:0.45px #292a2e">Development</div>
<div class="a" style="left:1338.9px;top:594.4px;width:226.2px;height:74.5px;border:1px solid #e1e2e6;border-radius:5px"></div>
<svg style="left:1352.5px;top:608.5px" width="5" height="9" viewBox="0 0 5 9"><path d="M0.7 0.7l3.5 3.8-3.5 3.8" fill="none" stroke="#505258" stroke-width="1.1" stroke-linecap="round" stroke-linejoin="round"/></svg>
<div class="t" style="left:1367.6px;top:602.7px;font-size:13.1px;color:#292a2e;-webkit-text-stroke:0.45px #292a2e">Automation</div>
<svg style="left:1446.5px;top:606.5px" width="10" height="12" viewBox="0 0 10 12"><path d="M6 0.7L1 6.7h3.5l-1 4.7 5-6H5z" fill="none" stroke="#505258" stroke-width="1.1" stroke-linejoin="round"/></svg>
<div class="t" style="left:1471.6px;top:602.7px;font-size:9.3px;color:#6b6e76">Rule executions</div>
<svg style="left:1352.5px;top:646px" width="5" height="9" viewBox="0 0 5 9"><path d="M0.7 0.7l3.5 3.8-3.5 3.8" fill="none" stroke="#505258" stroke-width="1.1" stroke-linecap="round" stroke-linejoin="round"/></svg>
<div class="t" style="left:1367.6px;top:640px;font-size:13.1px;color:#292a2e;-webkit-text-stroke:0.45px #292a2e">Atlassian project</div>
<svg style="left:1477px;top:643px" width="14" height="14" viewBox="0 0 14 14"><g fill="none" stroke="#44546f" stroke-width="1.2" stroke-linejoin="round" stroke-linecap="round"><path d="M12.7 1.3c-3 0-5.3 1.4-7.3 4.4L3.3 5.9 2 7.4l2.5 1 1.1 1.1 1 2.5 1.5-1.3.2-2.1c3-2 4.4-4.3 4.4-7.3z"/><path d="M3.6 10.4l-2.3 2.3M5 11.7l-1.3 1.3M2.3 9.2L1 10.5"/></g></svg>
<div class="a" style="left:1501.5px;top:640px;width:55px;height:20px;overflow:hidden"><div class="t" style="left:0;top:0;font-size:9.3px;color:#6b6e76">Link to share</div></div>
<div class="t" style="left:1349.6px;top:672.9px;font-size:9.6px;color:#505258">Created 4 days ago</div>
<div class="t" style="left:1349.6px;top:690px;font-size:9.6px;color:#505258">Updated 4 days ago</div>
<svg style="left:1488px;top:678.5px" width="12" height="12" viewBox="0 0 13 13"><g fill="none" stroke="#292a2e" stroke-width="1.2" stroke-linejoin="round"><path d="M5.4 0.8h2.2l.4 1.7 1.2.7 1.7-.5 1.1 1.9-1.3 1.2v1.4l1.3 1.2-1.1 1.9-1.7-.5-1.2.7-.4 1.7H5.4L5 10.5l-1.2-.7-1.7.5L1 8.4l1.3-1.2V5.8L1 4.6l1.1-1.9 1.7.5L5 2.5z"/><circle cx="6.5" cy="6.5" r="1.8"/></g></svg>
<div class="t m" style="left:1505px;top:674.5px;font-size:11.7px;color:#292a2e">Configure</div>
<div class="a" style="left:1528.3px;top:844.3px;width:37px;height:36.7px;border-radius:10px;background:#292a2e;box-shadow:0 4px 8px rgba(9,30,66,.15),0 0 1px rgba(9,30,66,.31)"></div>
<svg style="left:1538.5px;top:854px" width="17" height="18" viewBox="0 0 17 18"><path d="M8.5 0.3l7.6 4.4v9.1l-7.6 4.4L0.9 13.8V4.7z" fill="#fff" stroke="#fff" stroke-width="1.2" stroke-linejoin="round"/><path d="M6.1 5.6l5.2 3v4.2l-5.2-3z" fill="#292a2e"/><path d="M6.1 -1v7M11.3 12.3V19" stroke="#292a2e" stroke-width="1"/></svg>
<!--/RIGHT-->
</div></body></html>
